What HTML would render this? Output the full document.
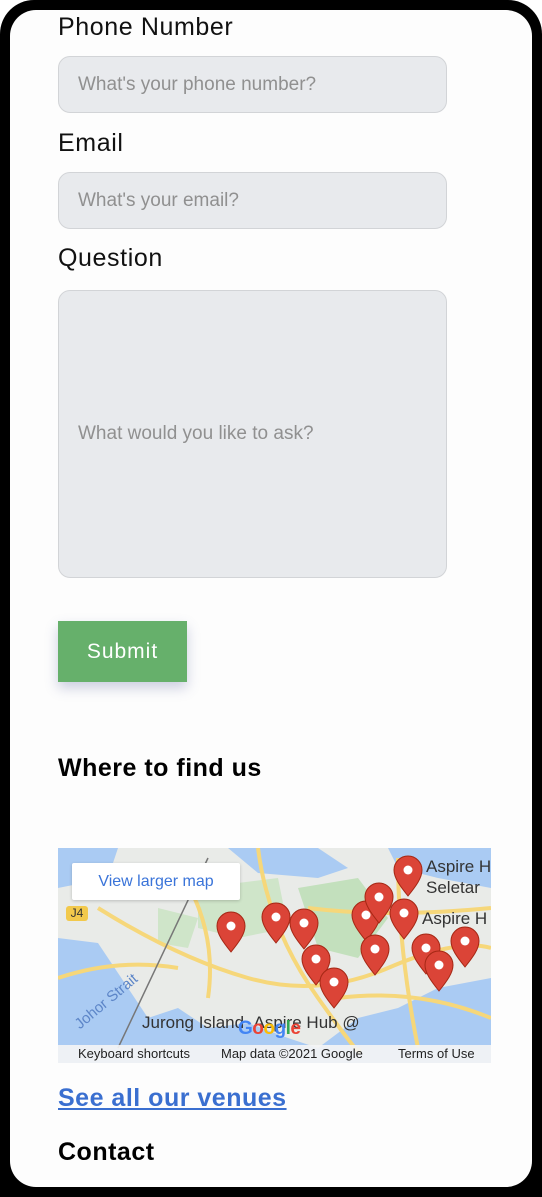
<!DOCTYPE html>
<html><head><meta charset="utf-8">
<style>
*{box-sizing:border-box;margin:0;padding:0}
html,body{width:542px;height:1197px;background:#fff;overflow:hidden}
.frame{position:absolute;left:0;top:0;width:542px;height:1197px;background:#000;border-radius:34px 34px 0 0}
.screen{position:absolute;left:10px;top:10px;width:522px;height:1177px;background:#fdfdfd;border-radius:26px;overflow:hidden}
.c{position:absolute;left:48px}
.lbl{font-family:"Liberation Sans",sans-serif;font-size:25px;color:#111;letter-spacing:.6px}
.inp{position:absolute;left:48px;width:389px;background:#e8eaed;border:1px solid #d2d4d7;border-radius:12px;font-family:"Liberation Sans",sans-serif;font-size:19px;color:#909090;padding-left:19px;display:flex;align-items:center}
.btn{position:absolute;left:48px;top:611px;width:129px;height:61px;background:#66b06b;color:#fff;font-family:"Liberation Sans",sans-serif;font-size:21px;letter-spacing:1px;display:flex;align-items:center;justify-content:center;box-shadow:0 6px 12px rgba(90,100,160,.3)}
h2{font-family:"Liberation Sans",sans-serif;font-size:25px;font-weight:bold;color:#000;letter-spacing:.5px}
.m{position:absolute;font:17px 'Liberation Sans',sans-serif;color:#333;white-space:nowrap}
</style></head><body>
<div class="frame"></div>
<div class="screen">
<div class="c lbl" style="top:3px">Phone Number</div>
<div class="inp" style="top:46px;height:57px">What's your phone number?</div>
<div class="c lbl" style="top:119px">Email</div>
<div class="inp" style="top:162px;height:57px">What's your email?</div>
<div class="c lbl" style="top:234px">Question</div>
<div class="inp" style="top:280px;height:288px">What would you like to ask?</div>
<div class="btn">Submit</div>
<h2 class="c" style="top:744px">Where to find us</h2>
<div style="position:absolute;left:48px;top:838px;width:433px;height:215px;overflow:hidden;background:#e9ebe8">
<svg width="433" height="216" viewBox="0 0 433 216" style="position:absolute;left:0;top:0">
<path d="M0 90 L40 95 L70 140 L90 170 L120 160 L150 180 L190 175 L230 190 L260 200 L300 170 L340 160 L380 140 L433 130 L433 216 L0 216Z" fill="#aacbf3"/>
<path d="M0 0 L60 0 L50 30 L0 40Z" fill="#aacbf3"/>
<path d="M170 0 L260 0 L290 20 L260 30 L200 25Z" fill="#aacbf3"/>
<path d="M330 0 L433 0 L433 40 L380 30 L340 20Z" fill="#aacbf3"/>
<path d="M140 40 L220 30 L230 80 L180 90 L140 80Z" fill="#cfe5c9"/>
<path d="M240 40 L300 30 L330 70 L300 110 L260 100Z" fill="#c3e0bd"/>
<path d="M100 60 L140 70 L130 100 L100 95Z" fill="#cfe5c9"/>
<g fill="none" stroke="#f6d77a" stroke-width="4">
<path d="M40 60 Q120 110 190 130 T330 120 T433 100"/>
<path d="M120 20 Q160 80 150 150"/>
<path d="M200 0 Q210 80 260 150 T300 200"/>
<path d="M250 60 Q330 70 433 60"/>
<path d="M340 10 Q340 100 360 200"/>
<path d="M0 130 Q60 110 120 120"/>
<path d="M280 150 Q360 140 433 170"/>
</g>
<path d="M150 10 L60 200" stroke="#777" stroke-width="1.5"/>
</svg>
<div style="position:absolute;left:14px;top:15px;width:168px;height:37px;background:#fff;border-radius:2px;box-shadow:0 1px 3px rgba(0,0,0,.2);font-family:'Liberation Sans',sans-serif;font-size:16px;color:#3a74d9;display:flex;align-items:center;justify-content:center">View larger map</div>
<div style="position:absolute;left:8px;top:58px;width:22px;height:15px;background:#f2c94c;border-radius:3px;font:12px 'Liberation Sans',sans-serif;text-align:center;line-height:15px;color:#333">J4</div>
<div style="position:absolute;left:10px;top:145px;transform:rotate(-40deg);font:15px 'Liberation Sans',sans-serif;color:#5d86c8;white-space:nowrap">Johor Strait</div>
<div class="m" style="left:84px;top:165px">Jurong Island &nbsp;Aspire Hub @</div>
<div class="m" style="left:368px;top:9px">Aspire H</div>
<div class="m" style="left:368px;top:30px">Seletar</div>
<div class="m" style="left:364px;top:61px">Aspire H</div>
<svg width="433" height="216" viewBox="0 0 433 216" style="position:absolute;left:0;top:0">
<defs><g id="p"><path d="M0 0 C-8 -10 -14 -18 -14 -26 A14 14 0 0 1 14 -26 C14 -18 8 -10 0 0Z" fill="#db4437" stroke="#a52714" stroke-width="1"/><circle cy="-26" r="4.5" fill="#fff"/></g></defs>
<use href="#p" x="173" y="104"/><use href="#p" x="218" y="95"/><use href="#p" x="246" y="101"/>
<use href="#p" x="258" y="137"/><use href="#p" x="276" y="160"/><use href="#p" x="308" y="93"/>
<use href="#p" x="321" y="75"/><use href="#p" x="346" y="91"/><use href="#p" x="350" y="48"/>
<use href="#p" x="317" y="127"/><use href="#p" x="368" y="126"/><use href="#p" x="381" y="143"/><use href="#p" x="407" y="119"/>
</svg>
<div style="position:absolute;left:180px;top:170px;font:bold 19px 'Liberation Sans',sans-serif;letter-spacing:-.5px"><span style="color:#4285f4">G</span><span style="color:#ea4335">o</span><span style="color:#fbbc05">o</span><span style="color:#4285f4">g</span><span style="color:#34a853">l</span><span style="color:#ea4335">e</span></div>
<div style="position:absolute;left:0;top:197px;width:433px;height:18px;background:rgba(245,245,245,.9);font:13px 'Liberation Sans',sans-serif;color:#222;white-space:nowrap;line-height:18px"><span style="position:absolute;left:20px">Keyboard shortcuts</span><span style="position:absolute;left:163px">Map data ©2021 Google</span><span style="position:absolute;left:340px">Terms of Use</span></div>
</div>
<div class="c" style="top:1074px;font:bold 25px 'Liberation Sans',sans-serif;color:#3a6fd0;text-decoration:underline;letter-spacing:.5px">See all our venues</div>
<h2 class="c" style="top:1128px">Contact</h2>
</div>
</body></html>
